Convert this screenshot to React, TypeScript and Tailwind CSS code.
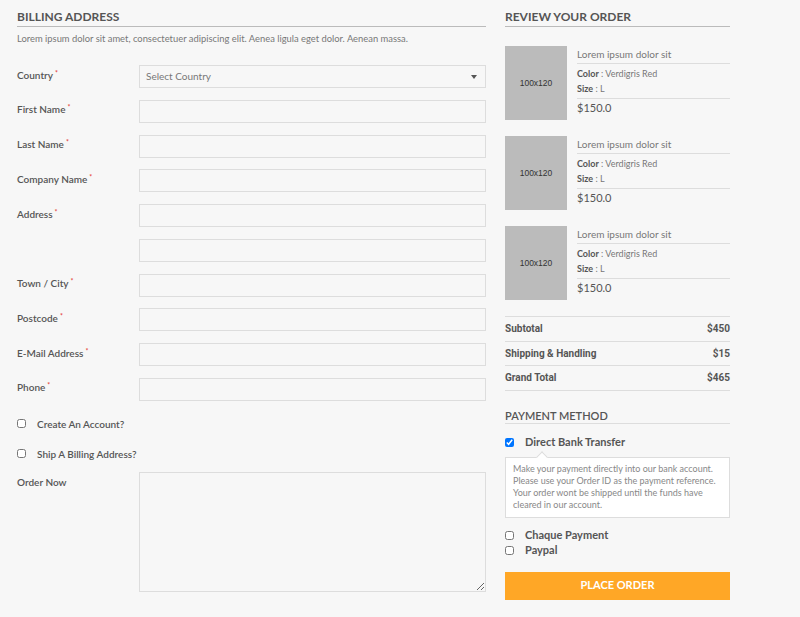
import { ReactNode } from 'react'

const fields = [
  { label: 'First Name', req: true },
  { label: 'Last Name', req: true },
  { label: 'Company Name', req: true },
  { label: 'Address', req: true },
  { label: '', req: false },
  { label: 'Town / City', req: true },
  { label: 'Postcode', req: true },
  { label: 'E-Mail Address', req: true },
  { label: 'Phone', req: true },
]

const items = [1, 2, 3]

const FieldRow = ({ label, req, children }: { label: string; req: boolean; children: ReactNode }) => (
  <div className="flex items-center h-[23px]">
    <label className="w-[122px] shrink-0 text-[10px] font-semibold text-[#555] -mt-[3px]">
      {label}
      {req && <span className="text-[#e53935] text-[7px] align-top ml-[2px]">*</span>}
    </label>
    {children}
  </div>
)

const SectionTitle = ({ children }: { children: ReactNode }) => (
  <h2 className="text-[12px] leading-[16px] font-bold uppercase text-[#555] pb-[1px] border-b border-[#bbb]">
    {children}
  </h2>
)

export default function App() {
  return (
    <div className="min-h-[617px] w-full bg-[#f7f7f7] font-['Lato','Open_Sans',sans-serif] text-[#555]">
      <div className="flex px-[17px] pt-[9px]">
        {/* Billing */}
        <div className="w-[469px] shrink-0">
          <SectionTitle>Billing Address</SectionTitle>
          <p className="mt-[5px] text-[9.4px] leading-[14px] text-[#777]">
            Lorem ipsum dolor sit amet, consectetuer adipiscing elit. Aenea ligula eget dolor. Aenean massa.
          </p>

          <div className="mt-[19px] flex flex-col gap-[11.75px]">
            <FieldRow label="Country" req>
              <div className="flex-1 h-[23px] border border-[#ddd] flex items-center justify-between px-[6px]">
                <span className="text-[10px] text-[#777]">Select Country</span>
                <span className="w-0 h-0 border-l-[3px] border-r-[3px] border-t-[4px] border-l-transparent border-r-transparent border-t-[#555] mr-[2px]" />
              </div>
            </FieldRow>
            {fields.map((f, i) => (
              <FieldRow key={i} label={f.label} req={f.req}>
                <input className="flex-1 h-[23px] border border-[#ddd] bg-transparent outline-none" />
              </FieldRow>
            ))}
          </div>

          <div className="mt-[18px] flex flex-col gap-[18px]">
            <label className="flex items-center h-[12px]">
              <input type="checkbox" className="w-[9px] h-[9px] m-0 -mt-[3px]" />
              <span className="ml-[11px] text-[10px] font-semibold text-[#555]">Create An Account?</span>
            </label>
            <label className="flex items-center h-[12px]">
              <input type="checkbox" className="w-[9px] h-[9px] m-0 -mt-[3px]" />
              <span className="ml-[11px] text-[10px] font-semibold text-[#555]">Ship A Billing Address?</span>
            </label>
          </div>

          <div className="mt-[11px] flex">
            <label className="w-[122px] shrink-0 pt-[3px] text-[10px] font-semibold text-[#555]">Order Now</label>
            <textarea className="flex-1 h-[120px] border border-[#ddd] bg-transparent outline-none" />
          </div>
        </div>

        {/* Review */}
        <div className="w-[225px] shrink-0 ml-[19px]">
          <SectionTitle>Review Your Order</SectionTitle>

          <div className="mt-[19px] flex flex-col gap-[16px]">
            {items.map((n) => (
              <div key={n} className="flex">
                <div className="w-[62px] h-[74px] shrink-0 bg-[#bbb] flex items-center justify-center font-['Liberation_Sans',sans-serif] text-[8.5px] text-[#333]">
                  100x120
                </div>
                <div className="flex-1 ml-[10px]">
                  <div className="text-[10px] leading-[16px] pb-[1px] text-[#777] border-b border-[#ddd]">
                    Lorem ipsum dolor sit
                  </div>
                  <div className="pt-[2px] pb-[2px] border-b border-[#ddd] text-[9px] leading-[15px]">
                    <div>
                      <span className="font-bold text-[#555]">Color</span>
                      <span className="text-[#777]"> : Verdigris Red</span>
                    </div>
                    <div>
                      <span className="font-bold text-[#555]">Size</span>
                      <span className="text-[#777]"> : L</span>
                    </div>
                  </div>
                  <div className="text-[11px] leading-[18px] text-[#555]">$150.0</div>
                </div>
              </div>
            ))}
          </div>

          <div className="mt-[16px] border-t border-[#ddd] font-['Roboto',sans-serif] text-[10px] font-bold text-[#555]">
            {[
              ['Subtotal', '$450'],
              ['Shipping & Handling', '$15'],
              ['Grand Total', '$465'],
            ].map(([k, v]) => (
              <div key={k} className="flex justify-between items-center h-[24.5px] border-b border-[#ddd]">
                <span>{k}</span>
                <span>{v}</span>
              </div>
            ))}
          </div>

          <h3 className="mt-[17px] text-[11px] leading-[15px] font-semibold uppercase text-[#555] border-b border-[#ddd]">
            Payment Method
          </h3>

          <label className="mt-[12px] flex items-center h-[14px]">
            <input type="checkbox" defaultChecked className="w-[9px] h-[9px] m-0" />
            <span className="ml-[11px] text-[11px] font-bold text-[#555]">Direct Bank Transfer</span>
          </label>

          <div className="relative mt-[7px] bg-white border border-[#ddd] px-[7px] pt-[5px] pb-[6px] text-[9px] leading-[12px] text-[#888]">
            <span className="absolute -top-[5px] left-[32px] w-[8px] h-[8px] bg-white border-l border-t border-[#ddd] rotate-45" />
            Make your payment directly into our bank account. Please use your Order ID as the payment reference. Your order wont be shipped until the funds have cleared in our account.
          </div>

          <div className="mt-[11px] flex flex-col gap-[1px]">
            <label className="flex items-center h-[14px]">
              <input type="checkbox" className="w-[9px] h-[9px] m-0" />
              <span className="ml-[11px] text-[11px] font-bold text-[#555]">Chaque Payment</span>
            </label>
            <label className="flex items-center h-[14px]">
              <input type="checkbox" className="w-[9px] h-[9px] m-0" />
              <span className="ml-[11px] text-[11px] font-bold text-[#555]">Paypal</span>
            </label>
          </div>

          <button className="mt-[14px] w-full h-[28px] bg-[#ffa726] text-white text-[11px] font-bold uppercase">
            Place Order
          </button>
        </div>
      </div>
    </div>
  )
}
